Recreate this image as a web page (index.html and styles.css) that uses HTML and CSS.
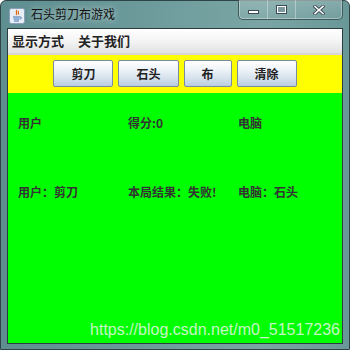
FILE: index.html
```html
<!DOCTYPE html>
<html lang="zh">
<head>
<meta charset="utf-8">
<link rel="stylesheet" href="styles.css">
</head>
<body>
<div class="window">
  <div class="titlebar">
    <svg class="app-icon" width="16" height="16" viewBox="0 0 16 16">
      <rect x="0.5" y="0.5" width="15" height="15" rx="2" fill="#e8eef5" stroke="#8aa0b8"/>
      <path d="M8 2 C6 4 9 5 7 7 M9.5 3 C8.5 4.5 10.5 5 9 6.5" stroke="#e06a10" stroke-width="1.2" fill="none"/>
      <path d="M4 9 H11 M4.5 11 H10.5 M5 13 H10" stroke="#3a6fb0" stroke-width="1"/>
      <path d="M11 9 C13 9 13 11 11 11" stroke="#3a6fb0" stroke-width="0.9" fill="none"/>
    </svg>
    <span class="title">石头剪刀布游戏</span>
    <div class="controls">
      <div class="ctl ctl-min"><span class="min-bar"></span></div>
      <div class="ctl ctl-max"><span class="max-box"></span></div>
      <div class="ctl ctl-close">
        <svg width="12" height="10" viewBox="0 0 12 10">
          <path d="M2 1.5 L10 8.5 M10 1.5 L2 8.5" stroke="#3b4a55" stroke-width="3.4" stroke-linecap="square"/>
          <path d="M2 1.5 L10 8.5 M10 1.5 L2 8.5" stroke="#ffffff" stroke-width="1.6" stroke-linecap="square"/>
        </svg>
      </div>
    </div>
  </div>
  <div class="client">
    <div class="menubar">
      <span class="menu-item">显示方式</span>
      <span class="menu-item">关于我们</span>
    </div>
    <div class="toolbar">
      <button class="btn">剪刀</button>
      <button class="btn">石头</button>
      <button class="btn">布</button>
      <button class="btn">清除</button>
    </div>
    <div class="board">
      <div class="grid">
        <span class="lbl">用户</span>
        <span class="lbl">得分:0</span>
        <span class="lbl">电脑</span>
        <span class="lbl">用户：剪刀</span>
        <span class="lbl">本局结果：失败!</span>
        <span class="lbl">电脑：石头</span>
      </div>
      <div class="watermark">https://blog.csdn.net/m0_51517236</div>
    </div>
  </div>
</div>
</body>
</html>
```
FILE: styles.css
```css
* { box-sizing: border-box; }
html, body { margin: 0; padding: 0; width: 350px; height: 350px; overflow: hidden; background: #ffffff; }
body { font-family: "Noto Sans CJK SC", "Noto Sans", sans-serif; }

.window {
  width: 350px;
  height: 350px;
  border: 1px solid #2f4446;
  border-radius: 6px 6px 0 0;
  background: linear-gradient(90deg, #5e8e90 0%, #6c9a9b 40%, #7aa5a4 75%, #6a9798 100%);
  padding: 0 6px 5px 6px;
  display: flex;
  flex-direction: column;
}

.titlebar {
  height: 27px;
  display: flex;
  align-items: flex-start;
  position: relative;
}
.app-icon { margin: 7px 0 0 2px; flex: none; }
.title {
  margin: 5px 0 0 6px;
  font-size: 12px;
  line-height: 16px;
  color: #111;
  text-shadow: 0 0 6px rgba(255,255,255,0.7);
}
.controls {
  margin-left: auto;
  margin-top: -1px;
  margin-right: 0;
  display: flex;
  height: 20px;
  border: 1px solid #3e5a5c;
  border-top: none;
  border-radius: 0 0 5px 5px;
  overflow: hidden;
  box-shadow: inset 0 0 0 1px rgba(255,255,255,0.35);
}
.ctl {
  height: 19px;
  display: flex;
  align-items: center;
  justify-content: center;
  background: linear-gradient(180deg, rgba(255,255,255,0.18), rgba(255,255,255,0.05));
}
.ctl-min { width: 29px; border-right: 1px solid rgba(255,255,255,0.35); }
.ctl-max { width: 28px; border-right: 1px solid rgba(255,255,255,0.35); }
.ctl-close { width: 46px; }
.min-bar {
  width: 11px; height: 4px; margin-top: 5px;
  background: #fff; border: 1px solid #3b4a55;
}
.max-box {
  width: 11px; height: 9px;
  border: 1px solid #3b4a55;
  background: #fff;
  box-shadow: inset 0 0 0 1px #fff, inset 0 0 0 4px #7d9aa0;
}

.client {
  flex: 1;
  border: 1px solid #2b3d3f;
  display: flex;
  flex-direction: column;
  background: #fff;
}

.menubar {
  height: 26px;
  padding-bottom: 2px;
  display: flex;
  align-items: center;
  gap: 14px;
  padding-left: 4px;
  background: linear-gradient(180deg, #ffffff 0%, #f4f4f4 50%, #e2e2e2 100%);
  border-bottom: 2px solid #d6d6d6;
}
.menu-item {
  font-size: 13px;
  line-height: 16px;
  font-weight: bold;
  color: #222;
  margin-top: 1px;
}

.toolbar {
  height: 38px;
  background: #ffff00;
  display: flex;
  justify-content: center;
  align-items: flex-start;
  gap: 5px;
  padding-top: 5px;
}
.btn {
  height: 27px;
  padding: 0 17px;
  border: 1px solid #7b8a9c;
  border-radius: 2px;
  background: linear-gradient(180deg, #ffffff 0%, #eef3f8 35%, #d5e1ec 70%, #b9cde0 100%);
  font-family: "Noto Sans CJK SC", sans-serif;
  font-size: 12px;
  font-weight: bold;
  color: #222;
  line-height: 14px;
}

.board {
  flex: 1;
  background: #00ff00;
  position: relative;
  padding: 23px 10px 0 10px;
}
.grid {
  display: grid;
  grid-template-columns: 110px 110px 1fr;
  row-gap: 55px;
}
.lbl {
  font-size: 12px;
  line-height: 14px;
  font-weight: bold;
  color: #333333;
  white-space: nowrap;
}
.watermark {
  position: absolute;
  right: 2px;
  bottom: 4px;
  font-family: "Liberation Sans", Arial, sans-serif;
  font-size: 16px;
  line-height: 18px;
  color: rgba(235, 245, 235, 0.85);
  white-space: nowrap;
}
```
